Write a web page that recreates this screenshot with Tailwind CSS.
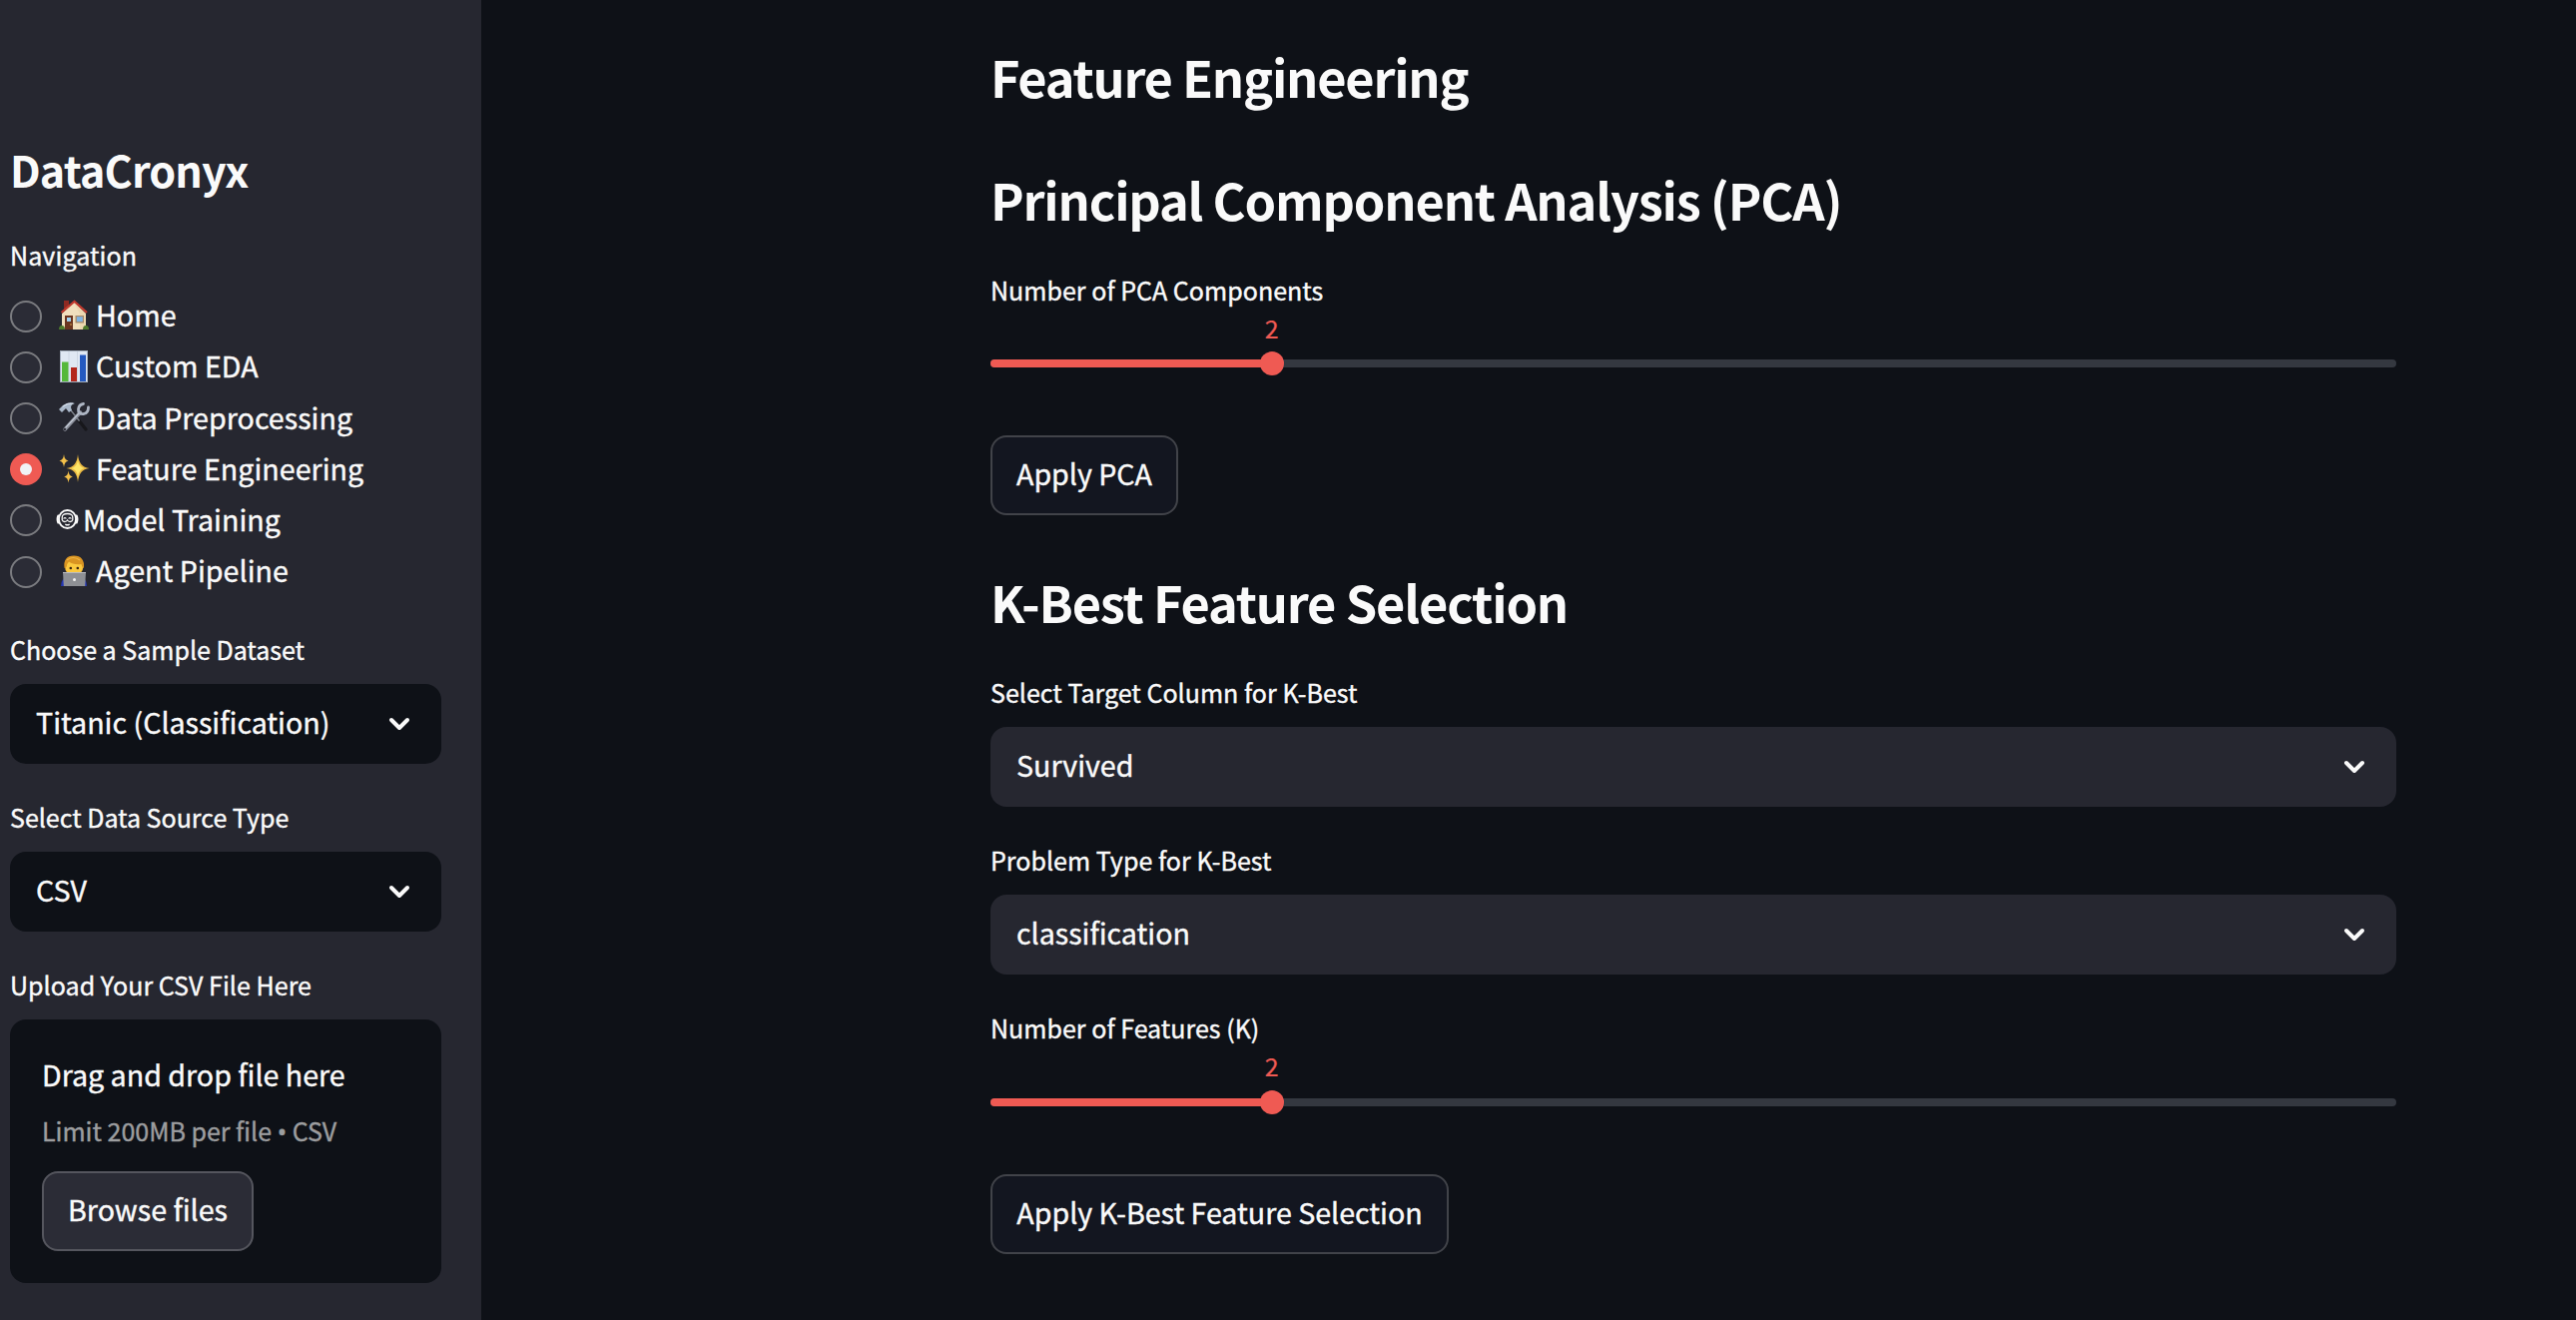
<!DOCTYPE html>
<html lang="en">
<head>
<meta charset="utf-8">
<title>DataCronyx</title>
<script src="https://cdn.jsdelivr.net/npm/@tailwindcss/browser@4"></script>
</head>
<body class="flex h-[1322px] w-[2580px] overflow-hidden bg-[#0e1117] font-['Noto_Sans_CJK_SC',sans-serif] text-[28.6px] text-[#fafafa] [-webkit-text-stroke:0.4px]">

<aside class="flex h-full w-[482px] shrink-0 flex-col bg-[#262730] pl-[10px] pr-[40px] pt-[139px]">
  <h1 class="h-[60px] text-[43px] font-bold leading-[60px] tracking-[-0.83px] [-webkit-text-stroke:0px]">DataCronyx</h1>

  <div class="mt-9 h-10 text-[25px] leading-10 tracking-[0.1px]">Navigation</div>
  <div class="mt-[16px] flex flex-col tracking-[0.04px]">
    <div class="flex h-[51.2px] items-center">
      <span class="size-8 shrink-0 rounded-full border-2 border-[#7b7c80] bg-[#2b2c36]"></span>
      <svg class="-mt-[2px] ml-[16px] h-8 w-8" viewBox="0 0 32 32">
        <path d="M6 1h5v9H6z" fill="#8e2a22"/>
        <path d="M4 14 16.500 2.500 28 14v16H4z" fill="#f1dfbd"/>
        <path d="M16.500 4 28 14v16h-6V14z" fill="#e6cfa4" opacity=".5"/>
        <path d="M3.500 13 16.500 2 29 13" fill="none" stroke="#c23a2e" stroke-width="2.200"/>
        <path d="M7 16h8v14H7z" fill="#6b3520"/><path d="M9 18h4v4H9z" fill="#9fd2f2"/><circle cx="13" cy="25" r=".8" fill="#e0b050"/>
        <path d="M17.500 16h8.500v7.500h-8.500z" fill="#a98a68"/><path d="M18.800 17.200h6v5h-6z" fill="#7fb4e4"/>
        <path d="M1 30q0-4 3-4t3 4zM25 30q0-4 3-4t3 4z" fill="#4e7a2c"/>
      </svg>
      <span class="-mt-[2px] ml-[6px]">Home</span>
    </div>
    <div class="flex h-[51.2px] items-center">
      <span class="size-8 shrink-0 rounded-full border-2 border-[#7b7c80] bg-[#2b2c36]"></span>
      <svg class="-mt-[2px] ml-[16px] h-8 w-8" viewBox="0 0 32 32">
        <path d="M2 0h28v32H2z" fill="#a6b0be"/><path d="M3 1h26v30H3z" fill="#e0e8f3"/>
        <path d="M11 1v30M19.500 1v30" stroke="#c9d2de" stroke-width=".8"/>
        <path d="M4 11.500h6.500V31H4z" fill="#55b83a"/><path d="M13 17h6v14h-6z" fill="#b3261c"/><path d="M22 4.500h6V31h-6z" fill="#2459c0"/>
      </svg>
      <span class="-mt-[2px] ml-[6px]">Custom EDA</span>
    </div>
    <div class="flex h-[51.2px] items-center">
      <span class="size-8 shrink-0 rounded-full border-2 border-[#7b7c80] bg-[#2b2c36]"></span>
      <svg class="-mt-[2px] ml-[16px] h-8 w-8" viewBox="0 0 32 32" fill="none" stroke-linecap="round">
        <path d="M13 9 28 28" stroke="#17171b" stroke-width="3.200"/><path d="m13 9 8 10" stroke="#777c86" stroke-width="1.800"/>
        <path d="M22.500 11 7 28" stroke="#8b8f9a" stroke-width="3.600"/><path d="M21 12 8 26" stroke="#c3cad6" stroke-width="1.200"/>
        <circle cx="6.800" cy="28" r="1.300" fill="#30313a"/>
        <path d="M25.500 2.500Q21 3 20.500 8T26 12.500Q30.500 11.500 30.500 6" stroke="#aeb6c4" stroke-width="2.800"/>
        <path d="m1 8 4-4Q10 0 17 2q-4 1-4 4l1 3-3 2-3-4-4 4z" fill="#a9b7c8"/>
        <path d="M5 5q5-4 10-3" stroke="#e2eaf5" stroke-width="1"/>
      </svg>
      <span class="-mt-[2px] ml-[6px]">Data Preprocessing</span>
    </div>
    <div class="flex h-[51.2px] items-center">
      <span class="flex size-8 shrink-0 items-center justify-center rounded-full bg-[#ef5a53]"><span class="size-3 rounded-full bg-[#f0f2f6]"></span></span>
      <svg class="-mt-[2px] ml-[16px] h-8 w-8" viewBox="0 0 32 32">
        <path d="M20 2q1 12.800 11.500 14Q21 17.200 20 30q-1-12.800-11.500-14Q19 14.800 20 2z" fill="#e9b843"/>
        <path d="M20 7.500q1 7.500 6.500 8.500-5.500 1-6.500 8.500-1-7.500-6.500-8.500 5.500-1 6.500-8.500z" fill="#fde568"/>
        <path d="M6 2q.5 5.700 4.500 6.500Q6.500 9.300 6 15 5.500 9.300 1.500 8.500 5.500 7.700 6 2z" fill="#f3c04a"/>
        <path d="M10.500 18.500q.5 5.300 4.300 6-3.800.7-4.300 6-.5-5.300-4.300-6 3.800-.7 4.300-6z" fill="#f3c04a"/>
      </svg>
      <span class="-mt-[2px] ml-[6px]">Feature Engineering</span>
    </div>
    <div class="flex h-[51.2px] items-center">
      <span class="size-8 shrink-0 rounded-full border-2 border-[#7b7c80] bg-[#2b2c36]"></span>
      <svg class="-mt-[2px] ml-[14px] h-[22px] w-[23px]" viewBox="0 0 23 22" fill="none" stroke="#fafafa" stroke-linecap="round">
        <ellipse cx="11.500" cy="11" rx="8.600" ry="9" stroke-width="1.900"/>
        <path d="M2.300 7.500Q.8 11 2.300 14.500M20.700 7.500q1.500 3.500 0 7" stroke-width="2"/>
        <path d="M6.200 9.500Q6 5.500 11.500 5.500t5.300 4v2q-.5 2-2.500 2-1.800 0-2.800-1.500-1 1.500-2.800 1.500-2 0-2.500-2z" stroke-width="1.300"/>
        <path d="M8 10.200q1-1.300 2 0M13 10.200q1-1.300 2 0" stroke-width="1.200"/><path d="M9.800 16.300q1.700 1 3.400 0" stroke-width="1.400"/>
      </svg>
      <span class="-mt-[2px] ml-[4px]">Model Training</span>
    </div>
    <div class="flex h-[51.2px] items-center">
      <span class="size-8 shrink-0 rounded-full border-2 border-[#7b7c80] bg-[#2b2c36]"></span>
      <svg class="-mt-[2px] ml-[16px] h-8 w-8" viewBox="0 0 32 32">
        <path d="M3 31q0-8 7-9h12q7 1 7 9z" fill="#2436b4"/>
        <path d="M7 11Q7 20 16 20t9.500-9z" fill="#f6bd36"/><ellipse cx="16.200" cy="11.500" rx="8.300" ry="8" fill="#fbc93f"/>
        <path d="M6.500 13Q5 .5 16 .5T26 13q-2-1-2.500-4-8 1-12.500-2.500Q8.500 9 8.500 12z" fill="#d99422"/>
        <path d="M9 5q6-5 13 0" fill="none" stroke="#eeb648" stroke-width="1.200"/>
        <circle cx="12.800" cy="13" r="1.300" fill="#3a2410"/><circle cx="19.800" cy="13" r="1.300" fill="#3a2410"/>
        <path d="M5 17h23l-.8 14H5.800z" fill="#8e9095"/><path d="M5 17h23v1H5z" fill="#b9bbc0"/><circle cx="16.500" cy="24.600" r="1.500" fill="#f2f2f2"/>
      </svg>
      <span class="-mt-[2px] ml-[6px]">Agent Pipeline</span>
    </div>
  </div>

  <div class="mt-8 h-10 text-[25px] leading-10">Choose a Sample Dataset</div>
  <div class="mt-[15px] flex h-20 w-[432px] shrink-0 items-center justify-between rounded-2xl bg-[#0e1117] pl-[26px] pr-[30px]">
    <span class="-mt-[3px]">Titanic (Classification)</span>
    <svg class="h-6 w-6" viewBox="0 0 24 24" fill="none" stroke="#fafafa" stroke-width="4" stroke-linecap="round" stroke-linejoin="round"><path d="m4 8 8 8 8-8"/></svg>
  </div>

  <div class="mt-[33px] h-10 text-[25px] leading-10">Select Data Source Type</div>
  <div class="mt-[15px] flex h-20 w-[432px] shrink-0 items-center justify-between rounded-2xl bg-[#0e1117] pl-[26px] pr-[30px]">
    <span class="-mt-[3px]">CSV</span>
    <svg class="h-6 w-6" viewBox="0 0 24 24" fill="none" stroke="#fafafa" stroke-width="4" stroke-linecap="round" stroke-linejoin="round"><path d="m4 8 8 8 8-8"/></svg>
  </div>

  <div class="mt-[33px] h-10 text-[25px] leading-10 tracking-[0.04px]">Upload Your CSV File Here</div>
  <div class="mt-[15px] flex h-[264px] w-[432px] shrink-0 flex-col items-start rounded-2xl bg-[#0e1117] px-8 pt-[31px]">
    <div class="h-12 leading-[48px]">Drag and drop file here</div>
    <div class="mt-3 h-10 whitespace-nowrap text-[25px] leading-10 text-[#9c9d9f]">Limit 200MB per file <span class="font-['Noto_Sans']">•</span> CSV</div>
    <div class="mt-[21px] flex h-20 w-[212px] items-center justify-center rounded-2xl border-2 border-[#55565e] bg-[#2b2c36]"><span class="-mt-[3px]">Browse files</span></div>
  </div>
</aside>

<main class="flex h-full w-[1918px] flex-col items-start pl-[510px] pt-[36px]">
  <h2 class="h-20 text-[50.5px] font-bold leading-[80px] tracking-[-1.22px] [-webkit-text-stroke:0px]">Feature Engineering</h2>
  <h2 class="mt-[43px] h-20 text-[50.5px] font-bold leading-[80px] tracking-[-1.18px] [-webkit-text-stroke:0px]">Principal Component Analysis (PCA)</h2>

  <div class="mt-[31px] h-10 text-[25px] leading-10 tracking-[0.03px]">Number of PCA Components</div>
  <div class="relative mt-[50px] h-2 w-full rounded-full bg-[#343840]">
    <div class="h-2 rounded-l-full bg-[#ef5a53]" style="width:20%"></div>
    <div class="absolute -top-2 size-6 -translate-x-1/2 rounded-full bg-[#ef5a53]" style="left:20%"></div>
    <div class="absolute -top-12 h-8 -translate-x-1/2 text-[25px] leading-8 text-[#ef5a53] [-webkit-text-stroke:0.2px]" style="left:20%">2</div>
  </div>
  <div class="mt-[68px] flex h-20 w-[188px] items-center justify-center rounded-2xl border-2 border-[#414349] bg-[#131620]"><span class="-mt-[3px]">Apply PCA</span></div>

  <h2 class="mt-[46px] h-20 text-[50.5px] font-bold leading-[80px] tracking-[-1.14px] [-webkit-text-stroke:0px]">K-Best Feature Selection</h2>

  <div class="mt-[31px] h-10 text-[25px] leading-10 tracking-[0.03px]">Select Target Column for K-Best</div>
  <div class="mt-[15px] flex h-20 w-full items-center justify-between rounded-2xl bg-[#262730] pl-[26px] pr-[30px]">
    <span class="-mt-[3px]">Survived</span>
    <svg class="h-6 w-6" viewBox="0 0 24 24" fill="none" stroke="#fafafa" stroke-width="4" stroke-linecap="round" stroke-linejoin="round"><path d="m4 8 8 8 8-8"/></svg>
  </div>

  <div class="mt-[33px] h-10 text-[25px] leading-10 tracking-[0.03px]">Problem Type for K-Best</div>
  <div class="mt-[15px] flex h-20 w-full items-center justify-between rounded-2xl bg-[#262730] pl-[26px] pr-[30px]">
    <span class="-mt-[3px]">classification</span>
    <svg class="h-6 w-6" viewBox="0 0 24 24" fill="none" stroke="#fafafa" stroke-width="4" stroke-linecap="round" stroke-linejoin="round"><path d="m4 8 8 8 8-8"/></svg>
  </div>

  <div class="mt-[33px] h-10 text-[25px] leading-10 tracking-[0.03px]">Number of Features (K)</div>
  <div class="relative mt-[51px] h-2 w-full rounded-full bg-[#343840]">
    <div class="h-2 rounded-l-full bg-[#ef5a53]" style="width:20%"></div>
    <div class="absolute -top-2 size-6 -translate-x-1/2 rounded-full bg-[#ef5a53]" style="left:20%"></div>
    <div class="absolute -top-[49px] h-8 -translate-x-1/2 text-[25px] leading-8 text-[#ef5a53] [-webkit-text-stroke:0.2px]" style="left:20%">2</div>
  </div>
  <div class="mt-[68px] flex h-20 w-[459px] items-center justify-center rounded-2xl border-2 border-[#414349] bg-[#131620]"><span class="-mt-[3px]">Apply K-Best Feature Selection</span></div>
</main>
</body>
</html>
